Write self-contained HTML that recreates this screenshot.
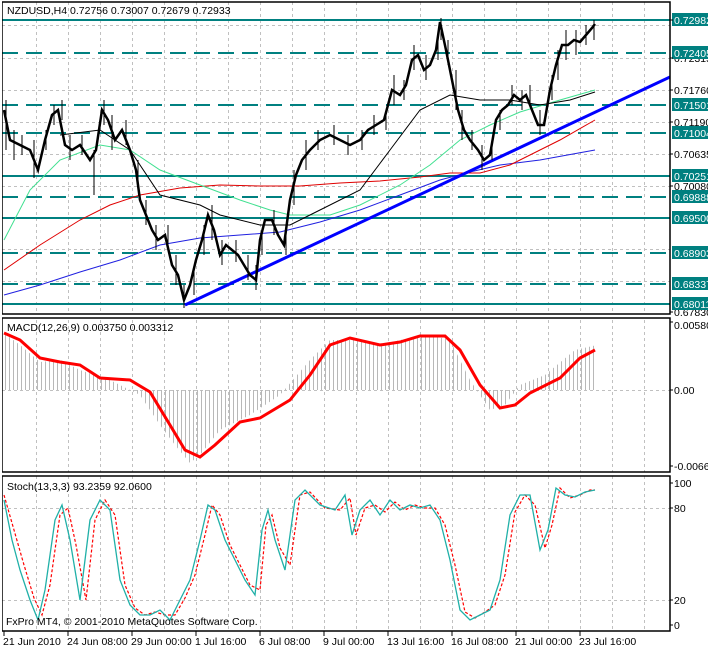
<!DOCTYPE html>
<html><head><meta charset="utf-8"><style>
html,body{margin:0;padding:0;background:#fff;}
svg{display:block;font-family:"Liberation Sans",sans-serif;font-size:10.5px;}
</style></head><body>
<svg width="708" height="648" viewBox="0 0 708 648" xmlns="http://www.w3.org/2000/svg">
<defs>
<pattern id="hb" width="4" height="10" patternUnits="userSpaceOnUse"><rect x="1" y="0" width="1" height="10" fill="#b8b8b8"/></pattern>
<clipPath id="c1"><rect x="3" y="2" width="667" height="312"/></clipPath>
</defs>
<rect width="708" height="648" fill="#fff"/>
<g stroke="#c0c0c0" stroke-dasharray="3,3" stroke-width="1">
<path d="M36.5 2V631M68.5 2V631M100.5 2V631M132.5 2V631M164.5 2V631M196.5 2V631M228.5 2V631M260.5 2V631M292.5 2V631M324.5 2V631M356.5 2V631M388.5 2V631M420.5 2V631M452.5 2V631M484.5 2V631M516.5 2V631M548.5 2V631M580.5 2V631M612.5 2V631M644.5 2V631"/>
<path d="M2 25.5H670M2 58.5H670M2 90.5H670M2 122.5H670M2 154.5H670M2 186.5H670M2 249.5H670M2 281.5H670M2 390.5H670M2 508.5H670M2 600.5H670"/>
</g>
<rect x="0" y="314" width="708" height="4" fill="#fff"/>
<rect x="0" y="472" width="708" height="4" fill="#fff"/>
<g stroke="#008080" stroke-width="2">
<path d="M2 20H670M2 176H670M2 218H670M2 304H670"/>
<path d="M2 53H670M2 105H670M2 133H670M2 197H670M2 253H670M2 284H670" stroke-dasharray="16,8"/>
</g>
<g clip-path="url(#c1)" fill="none">
<polyline stroke="#2020e0" stroke-width="1" points="4,295 40,285 80,272 120,260 160,245 200,238 240,235 280,232 320,222 360,210 400,195 440,180 470,172 500,165 540,160 595,150"/>
<polyline stroke="#e00000" stroke-width="1" points="4,270 40,245 80,220 110,205 140,195 180,188 220,185 260,186 300,186 340,183 380,181 420,177 450,173 480,173 510,165 560,140 595,120"/>
<polyline stroke="#40e090" stroke-width="1" points="4,240 30,190 60,160 100,145 130,150 160,170 200,185 240,200 270,210 290,215 330,215 360,205 400,185 430,165 460,140 490,125 520,112 560,100 595,90"/>
<polyline stroke="#000" stroke-width="1" points="60,135 100,130 130,150 160,195 200,205 220,215 260,225 290,225 320,210 360,190 390,150 420,110 450,95 480,100 510,100 540,105 570,100 595,92"/>
<line x1="185" y1="305" x2="670" y2="77" stroke="#0000ff" stroke-width="3"/>
<polyline stroke="#000" stroke-width="2.5" points="4,110 10,140 20,145 30,150 38,170 45,140 52,115 58,110 65,145 72,150 80,145 90,160 96,150 102,110 108,120 115,140 122,130 130,150 136,170 140,200 146,215 152,230 158,240 165,235 172,265 178,275 184,300 190,285 196,260 202,240 208,215 214,230 220,255 226,245 232,250 238,255 244,265 250,275 256,280 260,240 265,220 272,220 278,235 284,245 290,200 296,175 302,160 310,150 320,140 330,135 340,140 350,145 360,140 368,130 376,125 384,120 392,90 400,95 406,85 412,60 418,55 424,70 430,65 436,50 440,22 446,50 452,80 458,110 464,130 470,140 478,150 484,160 490,155 496,120 502,110 508,105 514,95 520,100 526,95 532,110 538,125 544,125 550,90 556,65 562,45 568,45 574,40 580,42 586,35 592,28 595,24"/>
<path stroke="#000" stroke-width="1" d="M6 100V150M14 130V160M22 135V155M34 140V178M46 130V150M54 105V125M62 100V120M70 135V160M82 135V155M94 150V195M104 100V125M112 115V150M126 120V145M138 160V190M146 200V225M156 225V250M168 225V250M176 255V285M184 285V308M194 270V295M204 225V255M212 205V240M222 240V265M236 240V262M248 255V280M256 265V290M262 230V255M274 210V235M286 230V255M294 170V205M306 140V170M318 130V150M334 125V145M348 135V155M362 130V150M374 115V135M386 110V130M394 75V105M404 80V100M414 45V70M426 55V80M438 40V60M441 18V40M448 40V65M456 70V110M462 110V140M472 130V150M482 145V170M492 140V160M500 110V130M512 85V105M522 90V110M530 85V105M540 110V135M552 75V100M558 50V80M566 30V60M576 30V55M586 25V45M594 20V40"/>
</g>
<polygon fill="url(#hb)" points="4,333 20,345 40,362 60,360 80,370 110,380 140,395 160,425 175,445 190,463 200,455 220,430 250,415 280,395 310,360 330,340 360,340 380,345 400,340 430,335 450,340 470,380 490,410 505,405 520,385 545,375 575,350 597,345 597,390 4,390"/>
<polyline fill="none" stroke="#ff0000" stroke-width="3" points="4,333 20,340 40,358 60,362 80,365 100,378 130,380 150,392 170,425 185,450 200,457 215,445 240,422 260,418 290,400 310,375 330,345 350,338 380,345 400,342 420,336 445,336 460,350 480,385 500,408 515,405 530,393 560,378 580,358 595,350"/>
<polyline fill="none" stroke="#ff0000" stroke-width="1.2" stroke-dasharray="3,2" points="4,495 14,530 24,565 34,598 42,615 50,585 60,515 68,508 76,545 86,600 95,520 105,500 115,515 125,585 135,608 145,615 155,612 165,615 175,615 185,598 195,575 205,535 212,505 220,515 230,545 240,565 250,585 260,590 266,525 272,515 280,548 290,565 300,495 310,492 325,508 340,510 350,498 356,535 365,508 375,505 385,512 395,502 405,510 415,505 425,508 435,508 445,525 455,565 465,612 475,618 485,612 495,605 505,575 515,512 525,495 535,505 545,548 552,525 560,488 570,498 580,495 590,490 595,490"/>
<polyline fill="none" stroke="#20b0a8" stroke-width="1.3" points="4,500 12,540 20,570 30,600 38,620 45,590 55,520 62,505 70,540 80,600 90,520 100,500 110,510 120,580 130,605 140,615 150,615 160,610 170,620 180,600 190,580 200,540 208,505 215,510 225,540 235,560 245,580 255,595 262,530 268,510 275,540 285,570 295,500 305,490 320,505 335,510 345,495 352,535 360,510 370,500 380,515 390,500 400,510 410,505 420,508 430,505 440,520 450,560 460,610 470,620 480,615 490,610 500,580 510,515 520,495 530,495 540,550 548,530 556,488 565,495 575,497 585,492 595,490"/>
<g fill="none" stroke="#000" stroke-width="1.5">
<rect x="2" y="2" width="668" height="312"/>
<rect x="2" y="318" width="668" height="154"/>
<rect x="2" y="476" width="668" height="155"/>
</g>
<rect x="0" y="0" width="2" height="648" fill="#fff"/>
<text x="7" y="14" fill="#000">NZDUSD,H4  0.72756 0.73007 0.72679 0.72933</text>
<text x="7" y="331" fill="#000">MACD(12,26,9) 0.003750 0.003312</text>
<text x="7" y="490" fill="#000">Stoch(13,3,3) 93.2359 92.0600</text>
<text x="6" y="625" fill="#000">FxPro MT4, © 2001-2010 MetaQuotes Software Corp.</text>
<g fill="#000">
<text x="674" y="62">0.72315</text>
<text x="674" y="94">0.71760</text>
<text x="674" y="126">0.71190</text>
<text x="674" y="158">0.70635</text>
<text x="674" y="190">0.70080</text>
<text x="674" y="316">0.67830</text>
<text x="674" y="329">0.00580</text>
<text x="674" y="394">0.00</text>
<text x="674" y="470">-0.00666</text>
<text x="674" y="487">100</text>
<text x="674" y="512">80</text>
<text x="674" y="604">20</text>
<text x="674" y="629">0</text>
</g>
<g fill="#008080">
<rect x="672" y="13" width="36" height="13"/><rect x="672" y="46" width="36" height="13"/><rect x="672" y="98" width="36" height="13"/><rect x="672" y="126" width="36" height="13"/><rect x="672" y="169" width="36" height="13"/><rect x="672" y="190" width="36" height="13"/><rect x="672" y="211" width="36" height="13"/><rect x="672" y="246" width="36" height="13"/><rect x="672" y="277" width="36" height="13"/><rect x="672" y="297" width="36" height="13"/>
</g>
<g fill="#fff">
<text x="674" y="24">0.72982</text><text x="674" y="57">0.72405</text><text x="674" y="109">0.71501</text><text x="674" y="137">0.71004</text><text x="674" y="180">0.70251</text><text x="674" y="201">0.69888</text><text x="674" y="222">0.69500</text><text x="674" y="257">0.68903</text><text x="674" y="288">0.68337</text><text x="674" y="308">0.68011</text>
</g>
<path d="M670 20h3M670 58h3M670 90h3M670 122h3M670 154h3M670 186h3M670 312h3M670 322h3M670 390h3M670 466h3M670 483h3M670 508h3M670 600h3M670 625h3" stroke="#000"/>
<path d="M4 631v5M68 631v5M132 631v5M196 631v5M260 631v5M324 631v5M388 631v5M452 631v5M516 631v5M580 631v5" stroke="#000"/>
<g fill="#000">
<text x="3" y="645">21 Jun 2010</text><text x="67" y="645">24 Jun 08:00</text><text x="131" y="645">29 Jun 00:00</text><text x="195" y="645">1 Jul 16:00</text><text x="259" y="645">6 Jul 08:00</text><text x="323" y="645">9 Jul 00:00</text><text x="387" y="645">13 Jul 16:00</text><text x="451" y="645">16 Jul 08:00</text><text x="515" y="645">21 Jul 00:00</text><text x="579" y="645">23 Jul 16:00</text>
</g>
</svg>
</body></html>
